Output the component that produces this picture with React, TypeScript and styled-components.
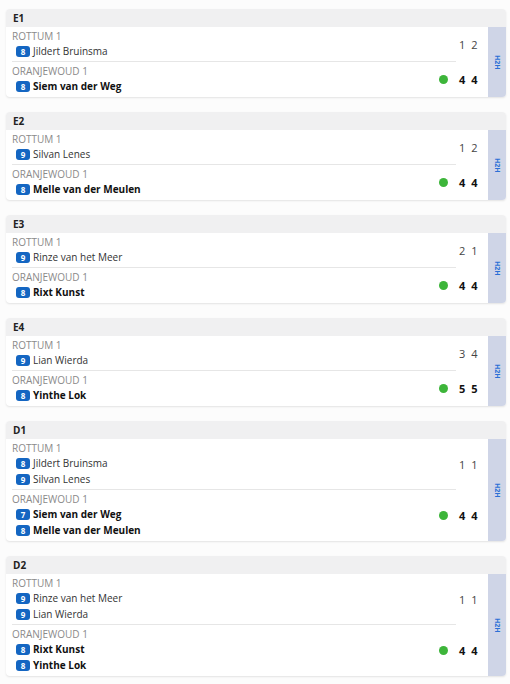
import { styled, createGlobalStyle } from 'styled-components'

type Player = { rating: number; name: string }
type Side = { team: string; players: Player[]; scores: number[]; winner?: boolean }
type Match = { title: string; home: Side; away: Side }

const matches: Match[] = [
  {
    title: 'E1',
    home: { team: 'ROTTUM 1', players: [{ rating: 8, name: 'Jildert Bruinsma' }], scores: [1, 2] },
    away: { team: 'ORANJEWOUD 1', players: [{ rating: 8, name: 'Siem van der Weg' }], scores: [4, 4], winner: true },
  },
  {
    title: 'E2',
    home: { team: 'ROTTUM 1', players: [{ rating: 9, name: 'Silvan Lenes' }], scores: [1, 2] },
    away: { team: 'ORANJEWOUD 1', players: [{ rating: 8, name: 'Melle van der Meulen' }], scores: [4, 4], winner: true },
  },
  {
    title: 'E3',
    home: { team: 'ROTTUM 1', players: [{ rating: 9, name: 'Rinze van het Meer' }], scores: [2, 1] },
    away: { team: 'ORANJEWOUD 1', players: [{ rating: 8, name: 'Rixt Kunst' }], scores: [4, 4], winner: true },
  },
  {
    title: 'E4',
    home: { team: 'ROTTUM 1', players: [{ rating: 9, name: 'Lian Wierda' }], scores: [3, 4] },
    away: { team: 'ORANJEWOUD 1', players: [{ rating: 8, name: 'Yinthe Lok' }], scores: [5, 5], winner: true },
  },
  {
    title: 'D1',
    home: {
      team: 'ROTTUM 1',
      players: [
        { rating: 8, name: 'Jildert Bruinsma' },
        { rating: 9, name: 'Silvan Lenes' },
      ],
      scores: [1, 1],
    },
    away: {
      team: 'ORANJEWOUD 1',
      players: [
        { rating: 7, name: 'Siem van der Weg' },
        { rating: 8, name: 'Melle van der Meulen' },
      ],
      scores: [4, 4],
      winner: true,
    },
  },
  {
    title: 'D2',
    home: {
      team: 'ROTTUM 1',
      players: [
        { rating: 9, name: 'Rinze van het Meer' },
        { rating: 9, name: 'Lian Wierda' },
      ],
      scores: [1, 1],
    },
    away: {
      team: 'ORANJEWOUD 1',
      players: [
        { rating: 8, name: 'Rixt Kunst' },
        { rating: 8, name: 'Yinthe Lok' },
      ],
      scores: [4, 4],
      winner: true,
    },
  },
]

const SideRow = ({ side, last }: { side: Side; last?: boolean }) => (
  <Row>
    <Names $last={last}>
      <Info>
        <TeamName>{side.team}</TeamName>
        {side.players.map((p) => (
          <PlayerLine key={p.name}>
            <Badge>{p.rating}</Badge>
            <PlayerName $bold={side.winner}>{p.name}</PlayerName>
          </PlayerLine>
        ))}
      </Info>
      {side.winner && <WinDot />}
    </Names>
    <Scores>
      {side.scores.map((s, i) => (
        <Score key={i} $bold={side.winner}>
          {s}
        </Score>
      ))}
    </Scores>
  </Row>
)

export default function App() {
  return (
    <Page>
      <GlobalStyle />
      {matches.map((m) => (
        <Card key={m.title}>
          <CardHeader>{m.title}</CardHeader>
          <CardBody>
            <Sides>
              <SideRow side={m.home} />
              <SideRow side={m.away} last />
            </Sides>
            <H2H>
              <span>H2H</span>
            </H2H>
          </CardBody>
        </Card>
      ))}
    </Page>
  )
}

const GlobalStyle = createGlobalStyle`
  * {
    box-sizing: border-box;
  }
  body {
    margin: 0;
    background: #fcfcfc;
    font-family: 'Open Sans', 'Noto Sans', sans-serif;
  }
`

const Page = styled.div`
  display: flex;
  flex-direction: column;
  gap: 15px;
  padding: 9px 4px 6px 6px;
`

const Card = styled.section`
  background: #fff;
  border-radius: 4px;
  box-shadow: 0 1px 2px rgba(0, 0, 0, 0.1);
`

const CardHeader = styled.div`
  height: 18px;
  line-height: 18px;
  padding-left: 7px;
  background: #f0f0f1;
  border-radius: 4px 4px 0 0;
  font-size: 10px;
  font-weight: 700;
  color: #222;
`

const CardBody = styled.div`
  display: flex;
`

const Sides = styled.div`
  flex: 1;
  padding-left: 6px;
`

const Row = styled.div`
  display: flex;
`

const Names = styled.div<{ $last?: boolean }>`
  flex: 1;
  display: flex;
  align-items: center;
  padding: 3px 8px ${(p) => (p.$last ? '3px' : '2px')} 0;
  border-bottom: ${(p) => (p.$last ? 'none' : '1px solid #e6e6e6')};
`

const Info = styled.div`
  flex: 1;
`

const TeamName = styled.div`
  font-size: 10px;
  line-height: 13px;
  color: #8a8a8a;
`

const PlayerLine = styled.div`
  display: flex;
  align-items: center;
  height: 16px;
  padding-left: 4px;
`

const Badge = styled.span`
  display: inline-flex;
  align-items: center;
  justify-content: center;
  width: 14px;
  height: 11px;
  border-radius: 3px;
  background: #1466c2;
  color: #fff;
  font-size: 8px;
  font-weight: 700;
  margin-right: 3px;
`

const PlayerName = styled.span<{ $bold?: boolean }>`
  font-size: 10px;
  font-weight: ${(p) => (p.$bold ? 700 : 400)};
  color: ${(p) => (p.$bold ? '#111' : '#333')};
`

const WinDot = styled.span`
  width: 9px;
  height: 9px;
  border-radius: 50%;
  background: #3db53a;
`

const Scores = styled.div`
  width: 32px;
  display: flex;
  align-items: center;
  gap: 6px;
  padding-left: 3px;
`

const Score = styled.span<{ $bold?: boolean }>`
  font-size: 11px;
  font-weight: ${(p) => (p.$bold ? 700 : 400)};
  color: ${(p) => (p.$bold ? '#111' : '#444')};
`

const H2H = styled.div`
  width: 18px;
  background: #cfd5e7;
  display: flex;
  align-items: center;
  justify-content: center;
  border-radius: 0 0 4px 0;
  span {
    writing-mode: vertical-rl;
    font-size: 7px;
    font-weight: 700;
    color: #2a6fd6;
  }
`
